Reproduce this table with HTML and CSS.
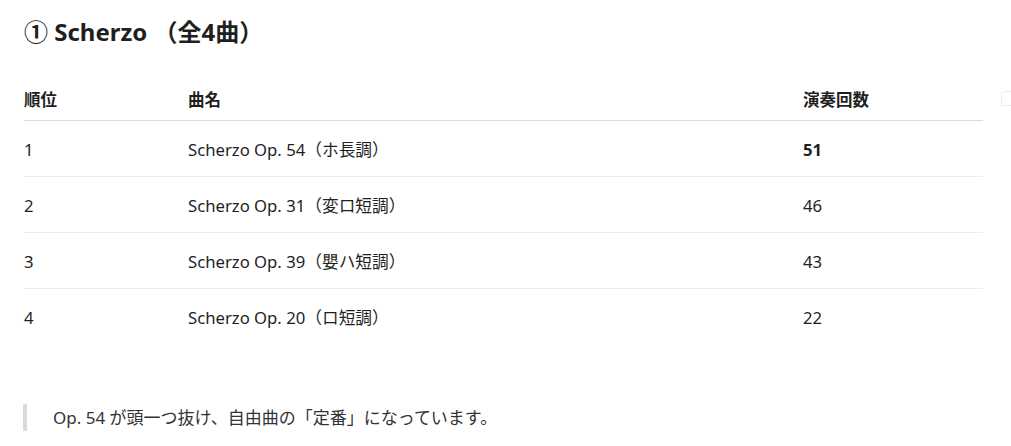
FILE: index.html
```html
<!DOCTYPE html>
<html lang="ja">
<head>
<meta charset="utf-8">
<link rel="stylesheet" href="styles.css">
</head>
<body>
<main class="doc">
  <h2 class="title">① Scherzo （全4曲）</h2>
  <div class="table-wrap">
    <table class="rank">
      <thead>
        <tr><th class="c1">順位</th><th class="c2">曲名</th><th class="c3">演奏回数</th></tr>
      </thead>
      <tbody>
        <tr><td>1</td><td>Scherzo Op. 54（ホ長調）</td><td><strong>51</strong></td></tr>
        <tr><td>2</td><td>Scherzo Op. 31（変ロ短調）</td><td>46</td></tr>
        <tr><td>3</td><td>Scherzo Op. 39（嬰ハ短調）</td><td>43</td></tr>
        <tr><td>4</td><td>Scherzo Op. 20（ロ短調）</td><td>22</td></tr>
      </tbody>
    </table>
    <span class="copy-btn" aria-hidden="true"></span>
  </div>
  <blockquote class="note">Op. 54 が頭一つ抜け、自由曲の「定番」になっています。</blockquote>
</main>
</body>
</html>
```
FILE: styles.css
```css
html, body {
  margin: 0;
  padding: 0;
  background: #ffffff;
}
body {
  font-family: "Noto Sans", "Noto Sans CJK JP", sans-serif;
  color: #1f1f1f;
  overflow: hidden;
}
.doc {
  padding: 15px 28px 0 24px;
}
.title {
  margin: 0;
  font-size: 24px;
  font-weight: 700;
  line-height: 34px;
}
.table-wrap {
  position: relative;
  margin-top: 39px;
}
.rank {
  width: 959px;
  border-collapse: collapse;
  font-size: 16.7px;
}
.rank th {
  text-align: left;
  font-weight: 700;
  font-size: 16.5px;
  line-height: 24px;
  padding: 0 0 8px 0;
  vertical-align: top;
  border-bottom: 1px solid #dcdcdc;
}
.rank td {
  padding: 2px 0 0 0;
  height: 53px;
  line-height: 24px;
  border-bottom: 1px solid #ededed;
}
.rank tbody tr:last-child td {
  border-bottom: none;
}
.c1 { width: 164px; }
.c2 { width: 615px; }
.c3 { width: 180px; }
.rank strong { font-weight: 700; }
.copy-btn {
  position: absolute;
  left: 977px;
  top: 3px;
  width: 14px;
  height: 13px;
  border: 1px solid #ececec;
  border-radius: 3px;
}
.note {
  margin: 60px 0 0 -1px;
  padding: 0 0 0 26px;
  border-left: 4px solid #dadada;
  font-size: 17px;
  line-height: 27px;
  color: #333333;
}
```
